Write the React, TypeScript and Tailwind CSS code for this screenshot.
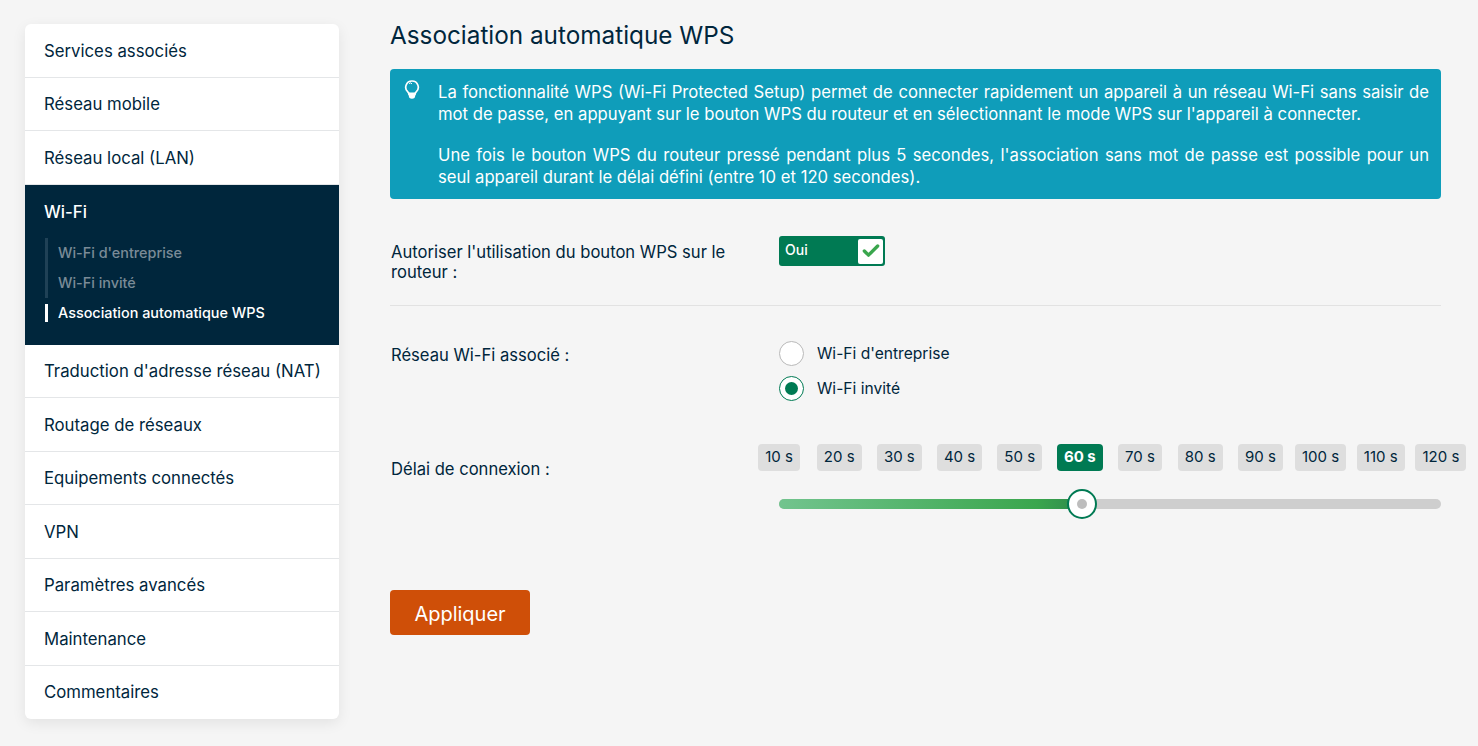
import React from 'react';
import { Check } from 'lucide-react';

const FONT = "font-['Inter','Liberation_Sans',sans-serif]";

const topItems = ['Services associés', 'Réseau mobile', 'Réseau local (LAN)'];
const bottomItems = [
  "Traduction d'adresse réseau (NAT)",
  'Routage de réseaux',
  'Equipements connectés',
  'VPN',
  'Paramètres avancés',
  'Maintenance',
  'Commentaires',
];
const delays = ['10 s', '20 s', '30 s', '40 s', '50 s', '60 s', '70 s', '80 s', '90 s', '100 s', '110 s', '120 s'];

const MenuRow = ({ label, last }: { label: string; last?: boolean }) => (
  <div className={`flex items-center pl-[19px] pt-[2px] text-[16.75px] text-[#00263c] ${last ? 'h-[53px]' : 'h-[53.5px] border-b border-[#e4e6e8]'}`}>
    {label}
  </div>
);

const Sidebar = () => (
  <div className="w-[314px] shrink-0 overflow-hidden rounded-md bg-white shadow-[0_4px_14px_rgba(0,0,0,0.08)]">
    {topItems.map((item) => (
      <MenuRow key={item} label={item} />
    ))}
    {/* Wi-Fi section */}
    <div className="h-[160px] bg-[#00263c] pl-[19px] pt-[17px]">
      <div className="text-[16.75px] font-medium leading-5 text-white">Wi-Fi</div>
      <div className="ml-[1px] mt-[16px] flex flex-col">
        <div className="flex h-[30px] items-center border-l-[3px] border-[#1f4156] pl-[10px] text-[14.4px] font-medium text-[#7a8b97]">Wi-Fi d'entreprise</div>
        <div className="flex h-[30px] items-center border-l-[3px] border-[#1f4156] pl-[10px] text-[14.4px] font-medium text-[#7a8b97]">Wi-Fi invité</div>
        <div className="my-[6px] flex h-[18px] items-center border-l-[3px] border-white pl-[10px] text-[14.4px] font-medium text-white">Association automatique WPS</div>
      </div>
    </div>
    {bottomItems.map((item, i) => (
      <MenuRow key={item} label={item} last={i === bottomItems.length - 1} />
    ))}
  </div>
);

const Bulb = () => (
  <svg width="16" height="19" viewBox="0 0 16 19" fill="none" className="ml-[1px] mr-[18px] mt-[-1px] shrink-0">
    <path
      d="M8 1a6.2 6.2 0 0 1 4.2 10.8c-.8.8-1.2 1.6-1.2 2.7H5c0-1.1-.4-1.9-1.2-2.7A6.2 6.2 0 0 1 8 1z"
      stroke="white"
      strokeWidth="1.7"
    />
    <path d="M4.8 12.5h6.4v3a3.2 3.2 0 0 1-6.4 0z" fill="white" />
    <path d="M5 3.6a2 2 0 0 1 3 .3" stroke="white" strokeWidth="1" />
  </svg>
);

const Radio = ({ label, checked }: { label: string; checked?: boolean }) => (
  <div className="flex h-[25px] items-center gap-[13px]">
    <div className={`flex h-[25px] w-[25px] items-center justify-center rounded-full border bg-white ${checked ? 'border-[#007a53]' : 'border-[#b9b9b9]'}`}>
      {checked && <div className="h-[13px] w-[13px] rounded-full bg-[#007a53]" />}
    </div>
    <span className="pt-[1px] text-[15.6px] text-[#00263c]">{label}</span>
  </div>
);

const DelaySlider = () => (
  <div className="w-[662px]">
    <div className="flex justify-between">
      {delays.map((d) => (
        <div key={d} className="flex w-0 justify-center">
          <span
            className={`flex h-[27px] shrink-0 items-center whitespace-nowrap rounded-[4px] px-[7px] text-[15px] ${
              d === '60 s' ? 'bg-[#007a53] font-bold text-white' : 'bg-[#dedede] text-[#00263c]'
            }`}
          >
            {d}
          </span>
        </div>
      ))}
    </div>
    <div className="relative mt-[28px] h-[10px] rounded-full bg-[#cecece]">
      <div className="h-full w-[303px] rounded-full bg-[linear-gradient(90deg,#72c48e,#3aa64d_85%,#2f8a4c)]" />
      <div className="absolute left-[288px] top-[-10px] flex h-[30px] w-[30px] items-center justify-center rounded-full border-2 border-[#007a53] bg-white">
        <div className="h-[10px] w-[10px] rounded-full bg-[#bdbdbd]" />
      </div>
    </div>
  </div>
);

export default function App() {
  return (
    <div className={`${FONT} flex h-[746px] items-start overflow-hidden bg-[#f5f5f5] pl-[25px] pt-[24px]`}>
      <Sidebar />
      <main className="ml-[51px] w-[1051px] shrink-0">
        <h1 className="mt-[-4px] text-[24.3px] leading-[30px] text-[#00263c]">Association automatique WPS</h1>

        <div className="mt-[19px] flex h-[130px] rounded-[4px] bg-[#0f9dba] pl-[13px] pr-[12px] pt-[12px] text-white">
          <Bulb />
          <div className="text-[16.67px] leading-[22px]">
            <p className="text-justify">
              La fonctionnalité WPS (Wi-Fi Protected Setup) permet de connecter rapidement un appareil à un réseau Wi-Fi sans saisir de mot de passe, en appuyant sur le bouton WPS du routeur et en sélectionnant le mode WPS sur l'appareil à connecter.
            </p>
            <p className="mt-[19px] text-justify">
              Une fois le bouton WPS du routeur pressé pendant plus 5 secondes, l'association sans mot de passe est possible pour un seul appareil durant le délai défini (entre 10 et 120 secondes).
            </p>
          </div>
        </div>

        <div className="mt-[37px] flex h-[70px] border-b border-[#e2e2e2]">
          <div className="w-[389px] pl-[1px] pt-[6px] text-[16.6px] leading-[20px] text-[#00263c]">
            Autoriser l'utilisation du bouton WPS sur le
            <br />
            routeur :
          </div>
          <div className="flex h-[30px] w-[106px] items-center justify-between rounded-[3px] bg-[#007a53] pl-[6px] pr-[2px]">
            <span className="mb-[2px] text-sm font-medium text-white">Oui</span>
            <span className="flex h-[25px] w-[25px] items-center justify-center rounded-[2px] bg-white">
              <Check size={20} strokeWidth={4} className="text-[#3aa64d]" />
            </span>
          </div>
        </div>

        <div className="mt-[35px] flex">
          <div className="w-[389px] pl-[1px] pt-[4px] text-[16.6px] leading-[20px] text-[#00263c]">Réseau Wi-Fi associé :</div>
          <div className="flex flex-col gap-[10px]">
            <Radio label="Wi-Fi d'entreprise" />
            <Radio label="Wi-Fi invité" checked />
          </div>
        </div>

        <div className="mt-[43px] flex">
          <div className="w-[389px] pl-[1px] pt-[15px] text-[16.6px] leading-[20px] text-[#00263c]">Délai de connexion :</div>
          <DelaySlider />
        </div>

        <button className="mt-[81px] h-[45px] w-[140px] rounded-[4px] bg-[#cf4f08] pt-[2px] text-xl text-white">Appliquer</button>
      </main>
    </div>
  );
}
